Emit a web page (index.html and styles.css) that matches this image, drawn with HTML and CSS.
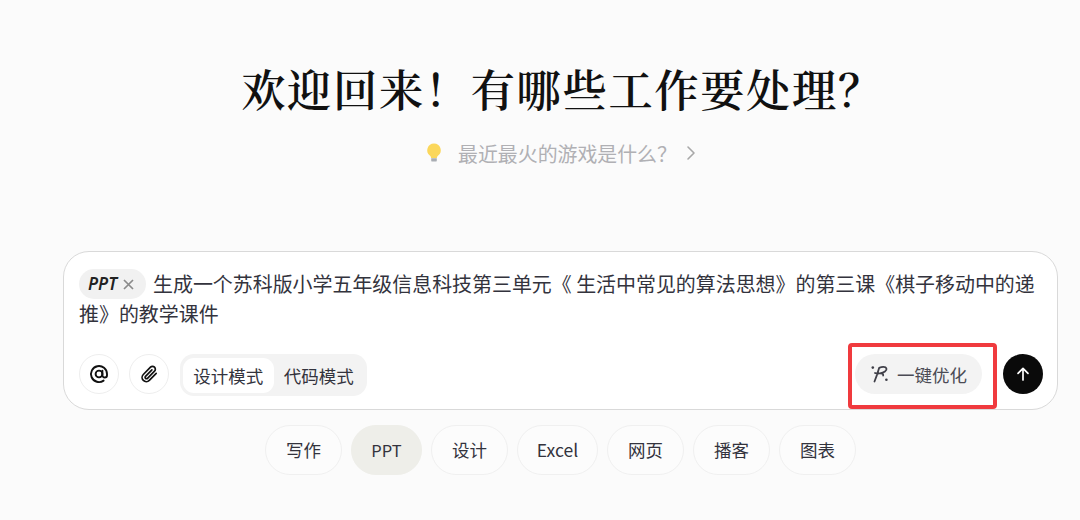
FILE: index.html
```html
<!DOCTYPE html>
<html lang="zh-CN">
<head>
<meta charset="utf-8">
<title>欢迎回来</title>
<link rel="stylesheet" href="styles.css">
</head>
<body>
<main class="page">
  <h1 class="title">欢迎回来！有哪些工作要处理？</h1>
  <div class="hint">
    <svg class="bulb" width="18" height="20" viewBox="0 0 18 20" aria-hidden="true">
      <path d="M9 0.5a6.8 6.8 0 0 0-4.2 12.1c.8.7 1.2 1.3 1.3 2.4h5.8c.1-1.1.5-1.7 1.3-2.4A6.8 6.8 0 0 0 9 .5z" fill="#fbd75b"/>
      <path d="M6.2 15.3h5.6v2.1a1.2 1.2 0 0 1-1.2 1.2H7.4a1.2 1.2 0 0 1-1.2-1.2z" fill="#a9adb3"/>
    </svg>
    <span class="hint-text">最近最火的游戏是什么？</span>
    <svg width="10" height="16" viewBox="0 0 10 16" aria-hidden="true"><path d="M2 2l6 6-6 6" fill="none" stroke="#a8a8a8" stroke-width="1.6" stroke-linecap="round" stroke-linejoin="round"/></svg>
  </div>

  <section class="card">
    <div class="prompt"><span class="tag"><i>PPT</i><svg width="11" height="11" viewBox="0 0 11 11" aria-hidden="true"><path d="M1 1l9 9M10 1l-9 9" stroke="#8a8a8a" stroke-width="1.7"/></svg></span>生成一个苏科版小学五年级信息科技第三单元《 生活中常见的算法思想》的第三课《棋子移动中的递推》的教学课件</div>
    <div class="actions">
      <button class="round">
        <svg width="20" height="20" viewBox="0 0 20 20" aria-hidden="true"><circle cx="10" cy="10" r="3.4" fill="none" stroke="#111" stroke-width="1.9"/><path d="M13.4 6.6v4.6a2.3 2.3 0 0 0 4.6 0V10a8 8 0 1 0-3.4 6.6" fill="none" stroke="#111" stroke-width="1.9" stroke-linecap="round"/></svg>
      </button>
      <button class="round">
        <svg width="20" height="20" viewBox="0 0 20 20" aria-hidden="true"><path d="M17.2 9.4l-6.9 7a4.2 4.2 0 0 1-6-5.9l7.2-7.3a2.8 2.8 0 0 1 4 4l-7 7.1a1.4 1.4 0 0 1-2-2l6.4-6.5" fill="none" stroke="#111" stroke-width="1.7" stroke-linecap="round" stroke-linejoin="round"/></svg>
      </button>
      <div class="modes">
        <span class="mode active">设计模式</span>
        <span class="mode">代码模式</span>
      </div>
      <div class="spacer"></div>
      <button class="optimize">
        <svg width="20" height="20" viewBox="0 0 20 20" aria-hidden="true"><path d="M4.5 17.5C6.4 13 7.8 8.6 9.2 3.8c2.4-1 6.4-1.4 7.2.5.9 2.2-2.6 4.4-6.4 5 2.2 0 3.4.7 3.2 2.2M9 9.4c-1.2.3-2.6.2-4-.4" fill="none" stroke="#3f3f48" stroke-width="1.8" stroke-linecap="round" stroke-linejoin="round"/><circle cx="2.8" cy="3.6" r="1.3" fill="#3f3f48"/><circle cx="16.4" cy="15.8" r="1.3" fill="#3f3f48"/></svg>
        一键优化
      </button>
      <button class="send">
        <svg width="16" height="16" viewBox="0 0 16 16" aria-hidden="true"><path d="M8 14V2.5M3 7.3l5-5 5 5" fill="none" stroke="#fff" stroke-width="1.7" stroke-linecap="round" stroke-linejoin="round"/></svg>
      </button>
      <div class="highlight"></div>
    </div>
  </section>

  <nav class="chips">
    <span class="chip">写作</span>
    <span class="chip selected">PPT</span>
    <span class="chip">设计</span>
    <span class="chip">Excel</span>
    <span class="chip">网页</span>
    <span class="chip">播客</span>
    <span class="chip">图表</span>
  </nav>
</main>
</body>
</html>
```
FILE: styles.css
```css
* { box-sizing: border-box; }
html, body { margin: 0; height: 100%; }
body {
  background: #fbfbfb;
  font-family: "Noto Sans CJK SC", "Noto Sans", sans-serif;
  color: #33333d;
  overflow: hidden;
}
.page {
  width: 1080px;
  height: 520px;
  padding: 58px 22px 0 63px;
  display: flex;
  flex-direction: column;
  align-items: center;
}
.title {
  margin: 0 0 0 4px;
  font-family: "Noto Serif CJK SC", "Noto Sans CJK SC", serif;
  font-size: 44.3px;
  letter-spacing: 1.6px;
  line-height: 60px;
  font-weight: 600;
  color: #111;
  white-space: nowrap;
}
.hint {
  margin-top: 19px;
  height: 32px;
  display: flex;
  align-items: center;
  color: #b0b0b4;
  font-size: 19.9px;
}
.bulb { margin-right: 15px; }
.hint-text { margin-right: 9px; }
.card {
  margin-top: 82px;
  width: 995px;
  height: 159px;
  background: #fff;
  border: 1px solid #d9d9d9;
  border-radius: 26px;
  padding: 17px 14px 14px 15px;
  display: flex;
  flex-direction: column;
  justify-content: space-between;
}
.prompt {
  font-size: 19.95px;
  line-height: 30px;
  height: 60px;
  color: #33333d;
}
.tag {
  display: inline-flex;
  align-items: center;
  gap: 6px;
  height: 30px;
  width: 67px;
  padding: 0 9px;
  margin-right: 7px;
  border-radius: 15px;
  background: #f1f1f1;
  font-size: 17px;
  line-height: 30px;
  font-weight: 600;
  color: #222;
  vertical-align: top;
}
.tag i { font-family: "Noto Sans", sans-serif; }
.actions {
  position: relative;
  display: flex;
  align-items: center;
  gap: 10px;
  height: 42px;
}
button {
  font-family: inherit;
  border: 0;
  padding: 0;
  display: flex;
  align-items: center;
  justify-content: center;
}
.round {
  width: 40px;
  height: 40px;
  border-radius: 50%;
  background: #fff;
  border: 1px solid #eeeeee;
}
.modes {
  margin: 2px 0 0 1px;
  height: 42px;
  width: 187px;
  padding: 3px;
  border-radius: 14px;
  background: #f3f3f3;
  display: flex;
  align-items: center;
}
.mode {
  font-size: 17.5px;
  width: 91px;
  height: 35px;
  line-height: 35px;
  text-align: center;
  color: #33333d;
  border-radius: 11px;
}
.mode.active { background: #fff; }
.spacer { flex: 1; }
.optimize {
  width: 127px;
  height: 40px;
  border-radius: 20px;
  background: #f3f3f3;
  color: #4b4b55;
  font-size: 17.5px;
  gap: 7px;
  margin-right: 11px;
}
.send {
  width: 40px;
  height: 40px;
  border-radius: 50%;
  background: #0a0a0a;
}
.highlight {
  position: absolute;
  right: 46px;
  top: -10px;
  width: 149px;
  height: 66px;
  border: 4px solid #f03a3e;
  border-radius: 4px;
  pointer-events: none;
}
.chips {
  margin-top: 15px;
  display: flex;
  gap: 9px;
}
.chip {
  width: 77px;
  height: 50px;
  line-height: 48px;
  border: 1px solid #f0f0f0;
  border-radius: 25px;
  text-align: center;
  font-size: 17.5px;
  color: #33333d;
  background: #fcfcfc;
}
.chip:nth-child(4) { width: 81px; }
.chip.selected {
  width: 71px;
  font-size: 16.5px;
  background: #eeeee9;
  border-color: #eeeee9;
}
```
